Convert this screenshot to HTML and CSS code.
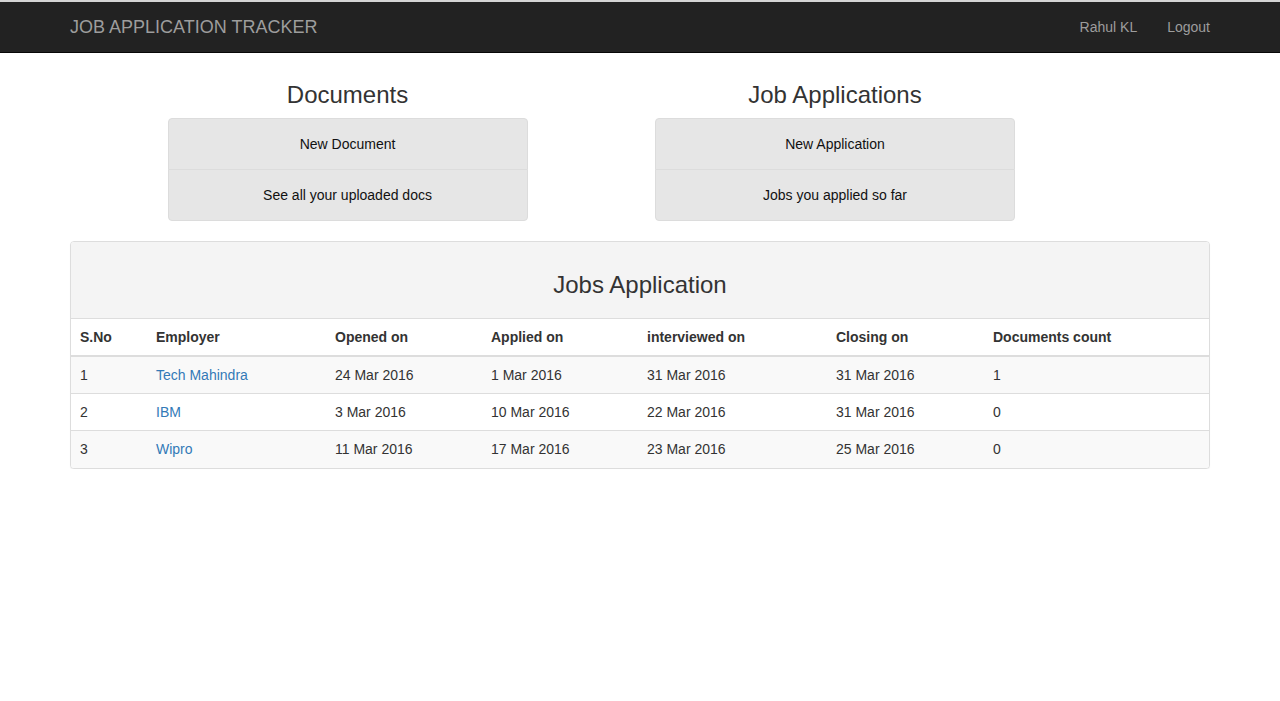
FILE: index.html
```html
<!DOCTYPE html>
<html lang="en">
<head>
<meta charset="utf-8">
<title>Job Application Tracker</title>
<link rel="stylesheet" href="styles.css">
</head>
<body>
<nav class="navbar">
  <div class="container nav-inner">
    <a class="brand" href="#">JOB APPLICATION TRACKER</a>
    <ul class="nav-right">
      <li><a href="#">Rahul KL</a></li>
      <li><a href="#">Logout</a></li>
    </ul>
  </div>
</nav>
<main class="container">
  <div class="row">
    <section class="col">
      <h3 class="col-title">Documents</h3>
      <div class="list-group">
        <a class="list-item" href="#">New Document</a>
        <a class="list-item" href="#">See all your uploaded docs</a>
      </div>
    </section>
    <section class="col">
      <h3 class="col-title">Job Applications</h3>
      <div class="list-group">
        <a class="list-item" href="#">New Application</a>
        <a class="list-item" href="#">Jobs you applied so far</a>
      </div>
    </section>
  </div>
  <div class="panel">
    <div class="panel-heading"><h3 class="panel-title">Jobs Application</h3></div>
    <table class="table">
      <colgroup>
        <col class="c1"><col class="c2"><col class="c3"><col class="c4"><col class="c5"><col class="c6"><col class="c7">
      </colgroup>
      <thead>
        <tr><th>S.No</th><th>Employer</th><th>Opened on</th><th>Applied on</th><th>interviewed on</th><th>Closing on</th><th>Documents count</th></tr>
      </thead>
      <tbody>
        <tr><td>1</td><td><a href="#">Tech Mahindra</a></td><td>24 Mar 2016</td><td>1 Mar 2016</td><td>31 Mar 2016</td><td>31 Mar 2016</td><td>1</td></tr>
        <tr><td>2</td><td><a href="#">IBM</a></td><td>3 Mar 2016</td><td>10 Mar 2016</td><td>22 Mar 2016</td><td>31 Mar 2016</td><td>0</td></tr>
        <tr><td>3</td><td><a href="#">Wipro</a></td><td>11 Mar 2016</td><td>17 Mar 2016</td><td>23 Mar 2016</td><td>25 Mar 2016</td><td>0</td></tr>
      </tbody>
    </table>
  </div>
</main>
</body>
</html>
```
FILE: styles.css
```css
* { box-sizing: border-box; }
html, body { margin: 0; padding: 0; }
body {
  font-family: "Liberation Sans", Arial, sans-serif;
  font-size: 14px;
  line-height: 1.42857;
  color: #333;
  background: #fff;
  border-top: 2px solid #d4d4d4;
}
a { text-decoration: none; color: #337ab7; }

.container {
  width: 1170px;
  margin: 0 auto;
  padding: 0 15px;
}

.navbar {
  background: #222;
  border-bottom: 1px solid #080808;
  height: 51px;
}
.nav-inner {
  display: flex;
  justify-content: space-between;
  align-items: stretch;
  height: 50px;
}
.brand {
  color: #9d9d9d;
  font-size: 18px;
  line-height: 20px;
  padding: 15px 0 15px;
  height: 50px;
}
.nav-right {
  list-style: none;
  margin: 0 -15px 0 0;
  padding: 0;
  display: flex;
}
.nav-right a {
  display: block;
  color: #9d9d9d;
  padding: 15px 15px 15px;
  line-height: 20px;
}

.row {
  display: flex;
  padding-left: 97.5px;
  margin: 0 -15px;
}
.col {
  width: 390px;
  padding: 0 15px;
  margin-right: 97.5px;
}
.col-title {
  font-size: 24px;
  font-weight: 500;
  line-height: 1.1;
  text-align: center;
  margin: 29px 0 10px;
  color: #333;
}
.list-group {
  margin-bottom: 20px;
  border-radius: 4px;
}
.list-item {
  display: block;
  background: #e6e6e6;
  border: 1px solid #dcdcdc;
  color: #111;
  text-align: center;
  padding: 15px;
  line-height: 20px;
  margin-bottom: -1px;
  height: 52px;
}
.list-item:first-child { border-radius: 4px 4px 0 0; }
.list-item:last-child { border-radius: 0 0 4px 4px; margin-bottom: 0; }

.panel {
  border: 1px solid #ddd;
  border-radius: 4px;
  box-shadow: 0 1px 1px rgba(0,0,0,0.05);
  overflow: hidden;
  background: #fff;
}
.panel-heading {
  background: #f4f4f4;
  border-bottom: 1px solid #ddd;
  height: 77px;
  display: flex;
  align-items: center;
  justify-content: center;
  padding-top: 10px;
}
.panel-title {
  margin: 0;
  font-size: 24px;
  font-weight: 500;
  line-height: 1.1;
  color: #333;
}
.table {
  width: 100%;
  border-collapse: collapse;
  table-layout: fixed;
}
.c1 { width: 77px; }
.c2 { width: 179px; }
.c3 { width: 156px; }
.c4 { width: 156px; }
.c5 { width: 189px; }
.c6 { width: 157px; }
.table th, .table td {
  text-align: left;
  padding: 8px;
  line-height: 20px;
  vertical-align: top;
}
.table th:first-child, .table td:first-child { padding-left: 9px; }
.table th {
  font-weight: bold;
  border-bottom: 2px solid #ddd;
  height: 37px;
}
.table td {
  border-top: 1px solid #ddd;
  height: 37px;
}
.table tbody tr:first-child td { border-top: 0; }
.table tbody tr:nth-child(odd) { background: #f9f9f9; }
```
